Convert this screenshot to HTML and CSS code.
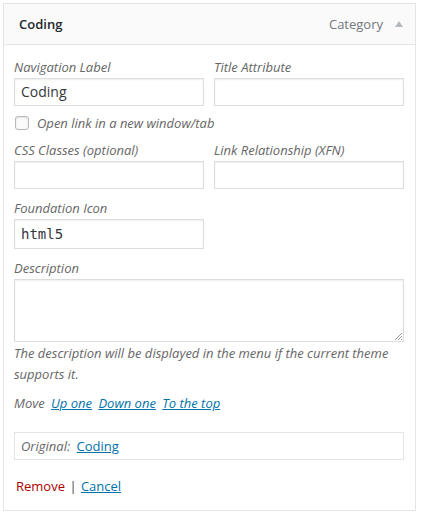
FILE: index.html
```html
<!DOCTYPE html>
<html>
<head>
<meta charset="utf-8">
<link rel="stylesheet" href="styles.css">
</head>
<body>
<div class="panel">
  <div class="head">
    <span class="title">Coding</span>
    <span class="type">Category <span class="arrow"></span></span>
  </div>
  <div class="body">
    <div class="row">
      <div class="field">
        <div class="label">Navigation Label</div>
        <div class="input">Coding</div>
      </div>
      <div class="field">
        <div class="label">Title Attribute</div>
        <div class="input"></div>
      </div>
    </div>
    <div class="check"><span class="box"></span><span class="label">Open link in a new window/tab</span></div>
    <div class="row">
      <div class="field">
        <div class="label">CSS Classes (optional)</div>
        <div class="input"></div>
      </div>
      <div class="field">
        <div class="label">Link Relationship (XFN)</div>
        <div class="input"></div>
      </div>
    </div>
    <div class="row row-icon">
      <div class="field">
        <div class="label">Foundation Icon</div>
        <div class="input mono">html5</div>
      </div>
    </div>
    <div class="field wide">
      <div class="label">Description</div>
      <div class="textarea"><svg class="grip" width="10" height="10" viewBox="0 0 10 10"><path d="M9 2L2 9M9 5L5 9M9 8L8 9" stroke="#999" stroke-width="1"/></svg></div>
    </div>
    <p class="desc">The description will be displayed in the menu if the current theme supports it.</p>
    <p class="move">Move <a>Up one</a> <a>Down one</a> <a>To the top</a></p>
    <div class="original"><span class="orig-label">Original:</span> <a class="plain">Coding</a></div>
    <div class="actions"><span class="remove">Remove</span> <span class="sep">|</span> <a class="plain">Cancel</a></div>
  </div>
</div>
</body>
</html>
```
FILE: styles.css
```css
html, body { margin: 0; padding: 0; background: #fff; }
body { font-family: "Open Sans", "Liberation Sans", sans-serif; font-size: 13px; color: #444; }
.panel { margin: 3px; width: 411px; border: 1px solid #e5e5e5; background: #fff; }
.head { height: 40px; background: #fafafa; border-bottom: 1px solid #e5e5e5; display: flex; align-items: center; justify-content: space-between; padding: 0 11px 0 15px; }
.title { font-weight: 600; color: #23282d; font-size: 13px; }
.type { color: #72777c; font-size: 13px; display: flex; align-items: center; }
.arrow { display: inline-block; width: 0; height: 0; border-left: 4px solid transparent; border-right: 4px solid transparent; border-bottom: 6px solid #b4b9be; margin-left: 12px; margin-right: 1px; }
.body { padding: 12px 11px 14px 10px; }
.row { display: flex; gap: 10px; }
.field { width: 190px; }
.field.wide { width: 390px; }
.label { font-style: italic; color: #666; line-height: 21px; }
.input { box-sizing: border-box; height: 28px; border: 1px solid #ddd; box-shadow: inset 0 1px 2px rgba(0,0,0,0.07); padding: 0 6px; line-height: 26px; font-size: 14px; color: #32373c; }
.input.mono { font-family: "DejaVu Sans Mono", "Liberation Mono", monospace; font-size: 14px; height: 30px; line-height: 28px; }
.check { display: flex; align-items: center; height: 20px; margin: 7px 0 7px 1px; }
.box { box-sizing: border-box; width: 14px; height: 14px; border: 1px solid #b4b9be; border-radius: 3px; box-shadow: inset 0 1px 2px rgba(0,0,0,0.1); background: #fbfbfb; margin-right: 8px; }
.row-icon { margin-top: 9px; }
.wide { margin-top: 9px; }
.textarea { position: relative; box-sizing: border-box; height: 63px; border: 1px solid #ddd; box-shadow: inset 0 1px 2px rgba(0,0,0,0.07); }
.grip { position: absolute; right: 0; bottom: 0; }
.desc { margin: 1px 0 0; font-style: italic; color: #666; line-height: 21px; }
.move { margin: 8px 0 0; font-style: italic; color: #666; line-height: 21px; }
a { color: #0073aa; text-decoration: underline; }
.move a { margin-left: 3px; }
.original { box-sizing: border-box; margin-top: 18px; height: 28px; border: 1px solid #e5e5e5; padding: 0 6px; line-height: 26px; }
.orig-label { font-style: italic; color: #666; margin-right: 3px; }
.actions { margin-top: 16px; line-height: 20px; padding-left: 2px; }
.remove { color: #a00; }
.sep { color: #444; margin: 0 1px; }
```
